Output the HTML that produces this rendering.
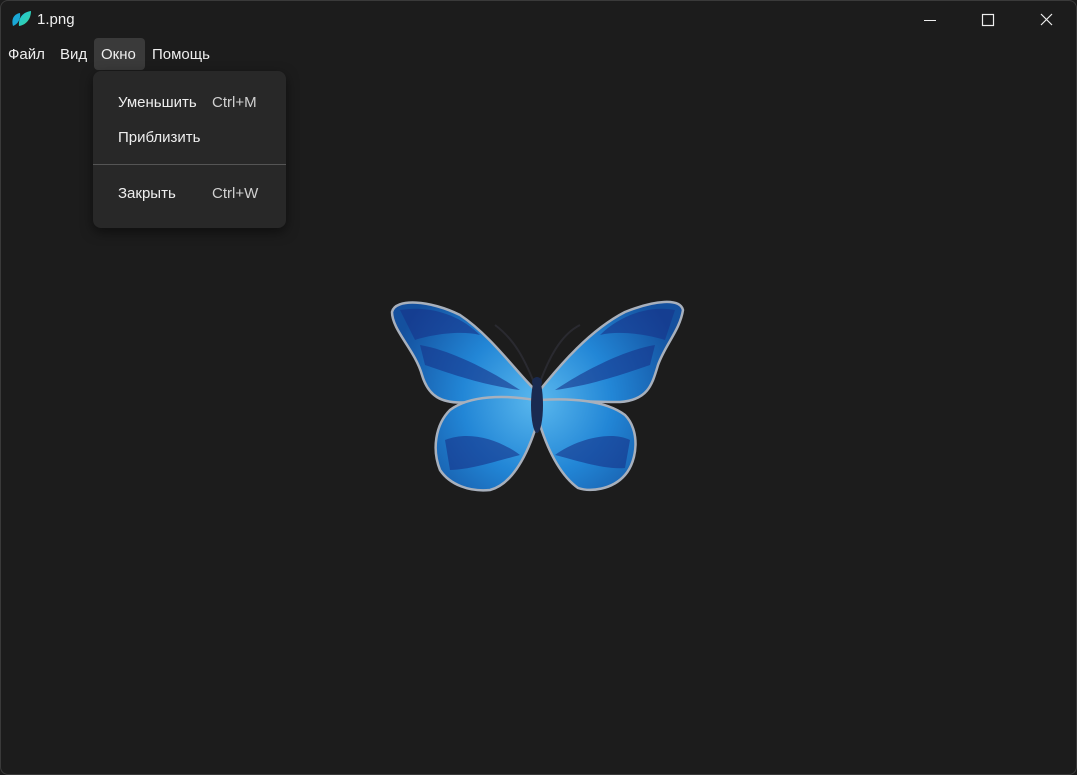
<!DOCTYPE html>
<html><head><meta charset="utf-8"><style>
html,body{margin:0;padding:0;width:1077px;height:775px;overflow:hidden;background:#1c1c1c;font-family:"Segoe UI","Liberation Sans","DejaVu Sans",sans-serif;color:#e6e6e6}
.win{position:absolute;left:0;top:0;width:1075px;height:773px;border:1px solid #3a3a3a;border-radius:8px;background:#1c1c1c;overflow:hidden}
.t{position:absolute;top:10px;font-size:15px;color:#f0f0f0}
.m{position:absolute;top:45px;font-size:15px;color:#eee}
.hl{position:absolute;left:93px;top:37px;width:51px;height:32px;background:#3a3a3a;border-radius:4px}
.menu{position:absolute;left:92px;top:70px;width:193px;height:157px;background:#282828;border-radius:8px;box-shadow:0 4px 12px rgba(0,0,0,.5)}
.it{position:absolute;font-size:15px;color:#eee}
.sc{position:absolute;font-size:15px;color:#d0d0d0}
</style></head><body><div class="win">
<svg style="position:absolute;left:10px;top:8px" width="22" height="20" viewBox="0 0 22 20">
<defs><linearGradient id="lg" x1="0" y1="0" x2="1" y2="1"><stop offset="0" stop-color="#1ec6e0"/><stop offset="1" stop-color="#3ad39a"/></linearGradient></defs>
<path d="M2 17 C0 10 3 5 9 4 C10 10 7 15 2 17Z" fill="#1aa8d6"/>
<path d="M8 17 C7 9 12 3 20 2 C20 10 15 16 8 17Z" fill="url(#lg)"/></svg>
<div class="t" style="left:36px">1.png</div>
<svg style="position:absolute;left:920px;top:10px" width="140" height="20">
<line x1="3" y1="9.5" x2="15" y2="9.5" stroke="#eee" stroke-width="1"/>
<rect x="61.5" y="3.5" width="11" height="11" fill="none" stroke="#eee" stroke-width="1.2"/>
<path d="M120 3 L131 14 M131 3 L120 14" stroke="#eee" stroke-width="1.2"/></svg>
<div class="hl"></div>
<div class="m" style="left:7px">Файл</div>
<div class="m" style="left:59px">Вид</div>
<div class="m" style="left:100px">Окно</div>
<div class="m" style="left:151px">Помощь</div>
<div class="menu">
<div class="it" style="left:25px;top:23px">Уменьшить</div><div class="sc" style="left:119px;top:23px">Ctrl+M</div>
<div class="it" style="left:25px;top:58px">Приблизить</div>
<div style="position:absolute;left:0;top:93px;width:193px;height:1px;background:#555"></div>
<div class="it" style="left:25px;top:114px">Закрыть</div><div class="sc" style="left:119px;top:114px">Ctrl+W</div>
</div>
<svg style="position:absolute;left:-1px;top:-1px" width="1077" height="775">
<defs><radialGradient id="bg" cx="537" cy="400" r="150" gradientUnits="userSpaceOnUse"><stop offset="0" stop-color="#5ab8ee"/><stop offset=".5" stop-color="#2286d6"/><stop offset="1" stop-color="#14509e"/></radialGradient></defs>
<path d="M535 385 C525 360 515 340 495 325 M539 385 C548 360 560 335 580 325" stroke="#2a2a30" stroke-width="2" fill="none"/>
<g fill="url(#bg)" stroke="#a8b0bc" stroke-width="2.5">
<path d="M535 390 C515 370 490 335 460 315 C430 300 395 298 392 312 C392 330 415 350 422 375 C428 395 440 405 470 402 C500 400 520 400 535 400Z"/>
<path d="M535 400 C505 395 470 395 450 410 C435 425 432 450 440 470 C450 485 470 492 490 490 C510 485 525 460 535 430Z"/>
<path d="M540 390 C560 365 590 330 625 312 C655 300 680 298 683 310 C680 330 665 345 658 365 C652 385 648 400 620 402 C590 402 560 400 540 400Z"/>
<path d="M540 400 C570 398 605 400 625 415 C640 430 638 460 625 475 C612 490 590 492 578 488 C560 475 548 450 540 425Z"/>
</g>
<g fill="#17338a" opacity=".6">
<path d="M400 310 C430 305 460 315 480 335 C460 330 430 335 415 340Z"/>
<path d="M675 310 C650 305 620 315 600 335 C620 330 650 335 665 340Z"/>
<path d="M445 440 C470 430 500 440 520 455 C500 460 470 470 450 470Z"/>
<path d="M630 440 C610 430 575 440 555 455 C575 460 605 470 625 468Z"/>
<path d="M420 345 C450 350 490 370 520 390 C480 385 440 370 425 365Z"/>
<path d="M655 345 C625 350 585 370 555 390 C595 385 635 370 650 365Z"/>
</g>
<ellipse cx="537" cy="405" rx="6" ry="28" fill="#1a2a50"/>
<circle cx="537" cy="382" r="5" fill="#1a2a50"/>
</svg>
</div></body></html>
